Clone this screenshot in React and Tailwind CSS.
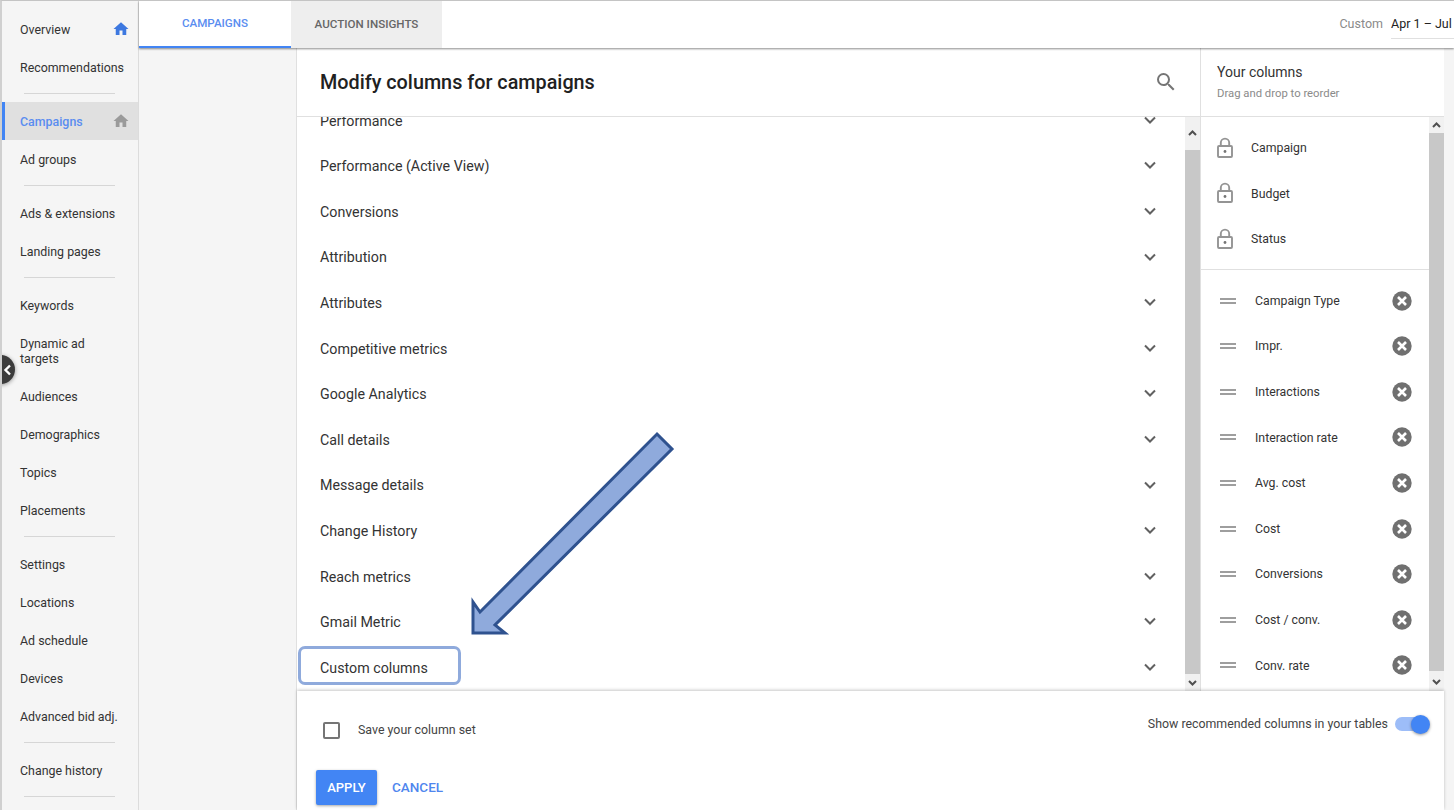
import React from "react";

const navGroups = [
  [{ label: "Overview", icon: "blue" }, { label: "Recommendations" }],
  [{ label: "Campaigns", icon: "gray", active: true }, { label: "Ad groups" }],
  [{ label: "Ads & extensions" }, { label: "Landing pages" }],
  [
    { label: "Keywords" },
    { label: "Dynamic ad targets", tall: true },
    { label: "Audiences" },
    { label: "Demographics" },
    { label: "Topics" },
    { label: "Placements" },
  ],
  [
    { label: "Settings" },
    { label: "Locations" },
    { label: "Ad schedule" },
    { label: "Devices" },
    { label: "Advanced bid adj." },
  ],
  [{ label: "Change history" }],
];

const sections = [
  "Performance",
  "Performance (Active View)",
  "Conversions",
  "Attribution",
  "Attributes",
  "Competitive metrics",
  "Google Analytics",
  "Call details",
  "Message details",
  "Change History",
  "Reach metrics",
  "Gmail Metric",
  "Custom columns",
];

const lockedColumns = ["Campaign", "Budget", "Status"];
const columns = [
  "Campaign Type",
  "Impr.",
  "Interactions",
  "Interaction rate",
  "Avg. cost",
  "Cost",
  "Conversions",
  "Cost / conv.",
  "Conv. rate",
];

function HomeIcon({ className }) {
  return (
    <svg viewBox="0 0 24 24" className={className} fill="currentColor">
      <path d="M10 20v-6h4v6h5v-8h3L12 3 2 12h3v8z" />
    </svg>
  );
}

function Chevron() {
  return (
    <svg className="-mt-[2px]" width="14" height="10" viewBox="0 0 14 10" fill="none" stroke="#616161" strokeWidth="2">
      <path d="M2 2.5l5 5 5-5" />
    </svg>
  );
}

function LockIcon() {
  return (
    <svg width="18" height="22" viewBox="0 0 18 22" fill="none" stroke="#949494" strokeWidth="1.9">
      <rect x="2" y="9" width="14" height="11" rx="1" />
      <path d="M4.8 9V5.8a4.2 4.2 0 0 1 8.4 0V9" />
      <circle cx="9" cy="14.5" r="1.4" fill="#757575" stroke="none" />
    </svg>
  );
}

function RemoveIcon() {
  return (
    <svg width="20" height="20" viewBox="0 0 20 20">
      <circle cx="10" cy="10" r="9.7" fill="#707070" />
      <path d="M6 6l8 8M14 6l-8 8" stroke="#fff" strokeWidth="2.6" />
    </svg>
  );
}

function ScrollTrack({ thumbTop, thumbBottom, className = "" }) {
  return (
    <div className={"flex w-[15px] shrink-0 flex-col bg-[#f1f1f1] " + className}>
      <div className={"flex shrink-0 items-center justify-center " + thumbTop}>
        <svg width="9" height="7" viewBox="0 0 9 7" fill="none" stroke="#505050" strokeWidth="2">
          <path d="M1 5l3.5-3.5L8 5" />
        </svg>
      </div>
      <div className="flex-1 bg-[#c8c8c8]" />
      <div className={"flex shrink-0 items-center justify-center " + thumbBottom}>
        <svg width="9" height="7" viewBox="0 0 9 7" fill="none" stroke="#505050" strokeWidth="2">
          <path d="M1 2l3.5 3.5L8 2" />
        </svg>
      </div>
    </div>
  );
}

function Sidebar() {
  return (
    <aside className="w-[137px] shrink-0 border-r border-[#dcdcdc] bg-[#f5f5f5] pt-[9px] text-[12.4px] text-[#333]">
      {navGroups.map((group, i) => (
        <div key={i}>
          {group.map((item) => (
            <div
              key={item.label}
              className={
                "flex items-center justify-between pr-[8px] " +
                (item.tall ? "h-[53px] leading-[15px] " : "h-[38px] ") +
                (item.active
                  ? "border-l-[3px] border-[#4285f4] bg-[#e0e0e0] pl-[15px] font-medium text-[#5a8df0]"
                  : "pl-[18px]")
              }
            >
              <span className={item.tall ? "w-[80px] pt-[1px]" : "pt-[2px]"}>{item.label}</span>
              {item.icon === "blue" && <HomeIcon className="h-[18px] w-[18px] text-[#3d78e0]" />}
              {item.icon === "gray" && <HomeIcon className="h-[18px] w-[18px] text-[#9a9a9a]" />}
            </div>
          ))}
          <div className="ml-[22px] mr-[23px] mt-[7px] mb-[8px] h-px bg-[#d6d6d6]" />
        </div>
      ))}
    </aside>
  );
}

function TopBar() {
  return (
    <div className="relative z-10 flex h-[47px] shrink-0 items-stretch bg-white shadow-[0_1px_2px_rgba(0,0,0,0.45)]">
      <div className="flex w-[152px] items-center justify-center border-b-[2px] border-[#4285f4] text-[11.6px] font-medium text-[#5a8df0]">
        CAMPAIGNS
      </div>
      <div className="flex w-[151px] items-center justify-center bg-[#eeeeee] text-[11.6px] font-medium text-[#666]">
        AUCTION INSIGHTS
      </div>
      <div className="ml-auto flex items-start pt-[14px] text-[12.5px]">
        <span className="mr-[8px] text-[#8a8a8a]">Custom</span>
        <span className="h-[24px] w-[63px] overflow-hidden whitespace-nowrap border-b border-[#e0e0e0] text-[#222]">
          Apr 1 – Jul
        </span>
      </div>
    </div>
  );
}

function SectionList() {
  return (
    <div className="flex min-w-0 flex-1 flex-col border-r border-[#e0e0e0]">
      <div className="flex h-[69px] shrink-0 items-center justify-between border-b border-[#e0e0e0] pl-[23px] pr-[22px]">
        <h1 className="pt-[2px] text-[19.8px] font-medium text-[#212121]">Modify columns for campaigns</h1>
        <svg viewBox="0 0 24 24" className="h-[24px] w-[24px]" fill="#757575">
          <path d="M15.5 14h-.79l-.28-.27A6.47 6.47 0 0 0 16 9.5 6.5 6.5 0 1 0 9.5 16c1.61 0 3.09-.59 4.23-1.57l.27.28v.79l5 4.99L20.49 19l-4.99-5zm-6 0C7.01 14 5 11.99 5 9.5S7.01 5 9.5 5 14 7.01 14 9.5 11.99 14 9.5 14z" />
        </svg>
      </div>
      <div className="flex min-h-0 flex-1">
        <div className="min-w-0 flex-1 overflow-hidden">
          <div className="-mt-[19px]">
            {sections.map((name) => (
              <div
                key={name}
                className="flex h-[45.6px] items-center justify-between pl-[23px] pr-[28px] text-[14.25px] text-[#333]"
              >
                <span className="pt-[1px]">{name}</span>
                <Chevron />
              </div>
            ))}
          </div>
        </div>
        <ScrollTrack thumbTop="h-[33px]" thumbBottom="h-[17px]" />
      </div>
    </div>
  );
}

function YourColumns() {
  return (
    <div className="flex w-[243px] shrink-0 flex-col">
      <div className="flex h-[69px] shrink-0 flex-col justify-center border-b border-[#e0e0e0] pl-[16px]">
        <div className="text-[14px] leading-[18px] text-[#333]">Your columns</div>
        <div className="mt-[5px] text-[11.3px] leading-[15px] text-[#8a8a8a]">Drag and drop to reorder</div>
      </div>
      <div className="flex min-h-0 flex-1">
        <div className="min-w-0 flex-1 overflow-hidden text-[12.3px] text-[#333]">
          <div className="pt-[8px]">
            {lockedColumns.map((name) => (
              <div key={name} className="flex h-[45.6px] items-center pl-[15px]">
                <LockIcon />
                <span className="ml-[17px] pt-[1px]">{name}</span>
              </div>
            ))}
          </div>
          <div className="mt-[7px] h-px bg-[#e0e0e0]" />
          <div className="pt-[8px]">
            {columns.map((name) => (
              <div key={name} className="flex h-[45.6px] items-center pl-[19px] pr-[17px]">
                <span className="flex h-[6px] w-[16px] flex-col justify-between">
                  <span className="h-[2px] bg-[#9e9e9e]" />
                  <span className="h-[2px] bg-[#9e9e9e]" />
                </span>
                <span className="ml-[19px] flex-1 pt-[1px]">{name}</span>
                <RemoveIcon />
              </div>
            ))}
          </div>
        </div>
        <ScrollTrack thumbTop="h-[16px]" thumbBottom="h-[20px]" />
      </div>
    </div>
  );
}

function Footer() {
  return (
    <div className="relative z-10 flex h-[119px] shrink-0 justify-between bg-white pl-[19px] pr-[14px] shadow-[0_-1px_3px_rgba(0,0,0,0.22)]">
      <div className="flex flex-col">
        <label className="mt-[30px] flex h-[18px] items-center pl-[7px] text-[12.4px] text-[#444]">
          <span className="h-[17px] w-[17px] rounded-[2px] border-2 border-[#757575]" />
          <span className="ml-[18px]">Save your column set</span>
        </label>
        <div className="mt-[31px] flex items-center">
          <button className="h-[35px] w-[61px] rounded-[2px] bg-[#4285f4] text-[13px] font-medium text-white shadow-[0_1px_3px_rgba(0,0,0,0.35)]">
            APPLY
          </button>
          <span className="ml-[15px] text-[13.5px] font-medium text-[#4f86ee]">CANCEL</span>
        </div>
      </div>
      <div className="mt-[23px] flex h-[20px] items-center text-[12.36px] text-[#444]">
        <span>Show recommended columns in your tables</span>
        <span className="relative ml-[7px] h-[14px] w-[35px]">
          <span className="absolute left-0 top-0 h-[14px] w-[30px] rounded-full bg-[#9dbdf8]" />
          <span className="absolute right-0 top-[-2px] h-[19px] w-[19px] rounded-full bg-[#4285f4] shadow-[0_1px_3px_rgba(0,0,0,0.4)]" />
        </span>
      </div>
    </div>
  );
}

export default function App() {
  return (
    <div
      className="relative flex h-[810px] w-[1454px] overflow-hidden border-t border-t-[#c4c4c4] border-l-2 border-l-[#d0d0d0] bg-[#f5f5f5]"
      style={{ fontFamily: "Roboto, sans-serif" }}
    >
      <Sidebar />
      <main className="flex min-w-0 flex-1 flex-col">
        <TopBar />
        <div className="flex min-h-0 flex-1 pl-[157px] pr-[10px]">
          <div className="flex min-w-0 flex-1 flex-col border-l border-[#e0e0e0] bg-white">
            <div className="flex min-h-0 flex-1">
              <SectionList />
              <YourColumns />
            </div>
            <Footer />
          </div>
        </div>
      </main>

      {/* sidebar collapse handle */}
      <div className="absolute left-[-16px] top-[354px] z-20 flex h-[29px] w-[29px] items-center justify-end rounded-full bg-[#3c3c3c] pr-[3px] shadow-[0_1px_4px_rgba(0,0,0,0.4)]">
        <svg width="9" height="12" viewBox="0 0 9 12" fill="none" stroke="#fff" strokeWidth="2.4">
          <path d="M7 1.5L2.5 6 7 10.5" />
        </svg>
      </div>

      {/* annotation drawn over the screenshot */}
      <div className="absolute left-[296px] top-[645px] z-20 h-[39px] w-[163px] rounded-[7px] border-[3px] border-[#8faadc]" />
      <svg className="absolute left-[466px] top-[428px] z-20" width="210" height="210" viewBox="468 429 210 210">
        <polygon
          points="657,434 672,449 495,625 505,633 473,633 473,602 480,612"
          fill="#8faadc"
          stroke="#2f528f"
          strokeWidth="3"
        />
      </svg>
    </div>
  );
}
